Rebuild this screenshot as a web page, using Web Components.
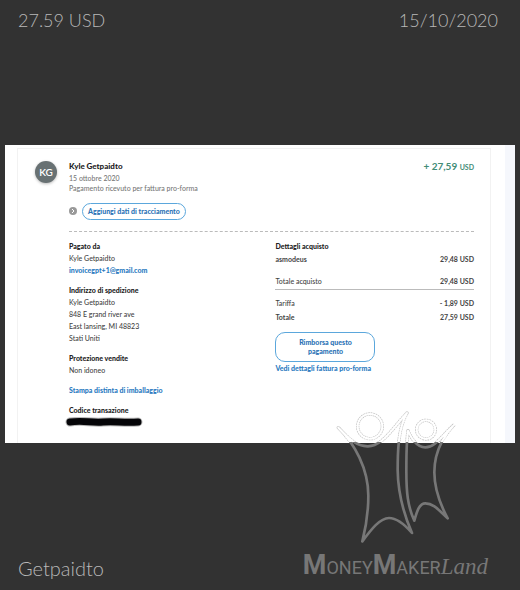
<!DOCTYPE html>
<html lang="it">
<head>
<meta charset="utf-8">
<meta name="viewport" content="width=device-width, initial-scale=1">
<title>Getpaidto</title>
<style>
    body {
        margin: 0;
        background: #323232;
        font-family: Lato, sans-serif;
    }
</style>
</head>
<body>
<proof-page>
    <span slot="amount">27.59 USD</span>
    <span slot="date">15/10/2020</span>
    <payment-receipt></payment-receipt>
    <span slot="site">Getpaidto</span>
    <brand-logo slot="brand"></brand-logo>
</proof-page>

<script>
function render(host, html) {
    const shadow = host.attachShadow({ mode: 'open' });
    const template = document.createElement('template');
    template.innerHTML = html;
    shadow.appendChild(template.content.cloneNode(true));
}

class ProofPage extends HTMLElement {
    constructor() {
        super();
        render(this, `
            <style>
                :host {
                    display: flex;
                    flex-direction: column;
                    min-height: 100vh;
                    color: #b8b8b8;
                    font-size: 18px;
                    font-weight: 300;
                    line-height: 24px;
                }
                header, footer {
                    display: flex;
                    justify-content: space-between;
                    align-items: flex-end;
                    padding: 8px 22px 8px 18px;
                }
                footer {
                    padding: 0 32px 10px 18px;
                    font-size: 20px;
                }
                main {
                    flex: 1;
                    display: flex;
                    flex-direction: column;
                    justify-content: center;
                    padding: 0 5px 6px;
                }
            </style>
            <header>
                <slot name="amount"></slot>
                <slot name="date"></slot>
            </header>
            <main><slot></slot></main>
            <footer>
                <slot name="site"></slot>
                <slot name="brand"></slot>
            </footer>
        `);
    }
}

class BrandLogo extends HTMLElement {
    constructor() {
        super();
        render(this, `
            <style>
                :host {
                    display: block;
                    position: relative;
                    color: #777;
                    font: 18px/24px Roboto, sans-serif;
                    white-space: nowrap;
                }
                b {
                    font-size: 27px;
                }
                i {
                    font: italic 23px/24px "Z003", "URW Chancery L", "Liberation Serif", serif;
                }
                /* the figures stand above the name and reach over the receipt */
                svg {
                    position: absolute;
                    right: 17px;
                    bottom: 21px;
                    width: 150px;
                    height: 160px;
                    fill: none;
                    stroke-linejoin: round;
                }
            </style>
            <svg viewBox="0 0 450 480" aria-hidden="true">
                <defs>
                    <clipPath id="upper"><rect width="450" height="129"/></clipPath>
                    <clipPath id="lower"><rect y="129" width="450" height="351"/></clipPath>
                    <g id="figures">
                        <circle cx="147" cy="82" r="37"/>
                        <circle cx="315" cy="92" r="28"/>
                        <path d="M52 86C82 117 105 143 141 142C184 141 212 91 258 42C233 86 230 145 230 214C231 284 248 345 273 402C248 373 225 357 204 357C177 357 151 391 124 427C134 388 142 348 142 290C142 210 101 134 52 86Z"/>
                        <path d="M261 95C270 116 287 145 313 145C345 145 364 107 400 77C360 119 340 162 340 220C340 276 359 319 380 358C353 333 337 313 313 313C295 313 288 336 280 365C260 322 256 280 256 215C256 160 257 123 261 95Z"/>
                    </g>
                </defs>
                <g clip-path="url(#lower)"><use href="#figures" stroke="#777" stroke-width="8"/></g>
                <g clip-path="url(#upper)">
                    <use href="#figures" stroke="#c4c4c4" stroke-width="10" stroke-dasharray="5 2"/>
                    <use href="#figures" stroke="#fff" stroke-width="6"/>
                </g>
            </svg>
            <span><b>M</b>ONEY<b>M</b>AKER<i>Land</i></span>
        `);
    }
}

class UserAvatar extends HTMLElement {
    constructor() {
        super();
        render(this, `
            <style>
                :host {
                    display: flex;
                    flex: none;
                    align-items: center;
                    justify-content: center;
                    width: 22px;
                    height: 22px;
                    border-radius: 50%;
                    background: #687173;
                    color: #fff;
                    font-size: 10px;
                    font-weight: 600;
                    box-shadow: 0 1px 3px #bbb;
                }
            </style>
            <slot></slot>
        `);
    }
}

class DetailGroup extends HTMLElement {
    constructor() {
        super();
        render(this, `
            <style>
                :host { display: block; }
                h3 {
                    margin: 0;
                    font-size: 7px;
                    font-weight: 900;
                    line-height: 12px;
                    color: #222;
                }
                ::slotted(div) { line-height: 12px; }
            </style>
            <h3></h3>
            <slot></slot>
        `);
    }
    connectedCallback() {
        this.shadowRoot.querySelector('h3').textContent = this.getAttribute('heading');
    }
}

class PillButton extends HTMLElement {
    constructor() {
        super();
        render(this, `
            <style>
                :host { display: block; }
                button {
                    display: block;
                    width: 100%;
                    padding: 3px 5px;
                    border: 1px solid #5ba7dc;
                    border-radius: 10px;
                    background: #fff;
                    color: #2a72b5;
                    font: 900 7px/9px Lato, sans-serif;
                }
                :host([large]) button {
                    padding: 5px 16px;
                }
            </style>
            <button type="button"><slot></slot></button>
        `);
    }
}

class PaymentReceipt extends HTMLElement {
    constructor() {
        super();
        render(this, `
            <style>
                :host {
                    display: block;
                    padding: 3px 14px 0 12px;
                    background: #fff;
                    border-right: 10px solid #f5f7fc;
                    color: #444;
                    font-size: 7px;
                    font-weight: 500;
                    line-height: 10px;
                }
                article {
                    display: flex;
                    gap: 12px;
                    padding: 12px 16px 16px 17px;
                    border: 1px solid #f2f2f2;
                    border-bottom: 0;
                }
                .body { flex: 1; }
                .top {
                    display: flex;
                    justify-content: space-between;
                }
                h2 {
                    margin: 0 0 1px;
                    color: #1d1d25;
                    font-size: 8px;
                    font-weight: 900;
                    line-height: 11px;
                }
                .muted { color: #777; }
                .amount {
                    color: #428c76;
                    font-size: 10px;
                    font-weight: 700;
                }
                small { font-size: 7px; }
                .track {
                    display: flex;
                    align-items: center;
                    gap: 5px;
                    margin-top: 10px;
                    padding-bottom: 11px;
                    border-bottom: 1px dashed #bbb;
                }
                .track svg {
                    width: 8px;
                    height: 8px;
                }
                .columns {
                    display: grid;
                    grid-template-columns: 207fr 199fr;
                    padding-top: 8px;
                }
                .left {
                    display: flex;
                    flex-direction: column;
                    gap: 8px;
                }
                a {
                    color: #2a7abf;
                    font-weight: 900;
                    line-height: 12px;
                    text-decoration: none;
                }
                .redacted {
                    display: block;
                    width: 78px;
                    height: 10px;
                    margin: 1px 0 0 -4px;
                }
                table {
                    width: 100%;
                    border-collapse: collapse;
                }
                td, th {
                    padding: 0;
                    height: 14px;
                    font-weight: 700;
                    text-align: left;
                }
                td { text-align: right; }
                .sum th, .sum td {
                    height: 16px;
                    padding-top: 7px;
                    border-bottom: 1px solid #bbb;
                }
                .sum th, .fee th { font-weight: 500; }
                .fee th, .fee td { padding-top: 6px; }
                pill-button[large] {
                    width: 100px;
                    margin-top: 8px;
                }
            </style>
            <article>
                <user-avatar>KG</user-avatar>
                <div class="body">
                    <div class="top">
                        <div>
                            <h2>Kyle Getpaidto</h2>
                            <div class="muted">15 ottobre 2020</div>
                            <div class="muted">Pagamento ricevuto per fattura pro-forma</div>
                        </div>
                        <div class="amount">+ 27,59 <small>USD</small></div>
                    </div>
                    <div class="track">
                        <svg viewBox="0 0 16 16" aria-hidden="true">
                            <circle cx="8" cy="8" r="8" fill="#999"/>
                            <path d="M6 4l4 4-4 4" fill="none" stroke="#fff" stroke-width="2"/>
                        </svg>
                        <pill-button>Aggiungi dati di tracciamento</pill-button>
                    </div>
                    <div class="columns">
                        <div class="left">
                            <detail-group heading="Pagato da">
                                <div>Kyle Getpaidto</div>
                                <div><a href="mailto:invoicegpt+1@gmail.com">invoicegpt+1@gmail.com</a></div>
                            </detail-group>
                            <detail-group heading="Indirizzo di spedizione">
                                <div>Kyle Getpaidto</div>
                                <div>848 E grand river ave</div>
                                <div>East lansing, MI 48823</div>
                                <div>Stati Uniti</div>
                            </detail-group>
                            <detail-group heading="Protezione vendite">
                                <div>Non idoneo</div>
                            </detail-group>
                            <a href="#">Stampa distinta di imballaggio</a>
                            <detail-group heading="Codice transazione">
                                <svg class="redacted" viewBox="0 0 78 10" aria-hidden="true">
                                    <path d="M5 5C18 3 26 6 38 5S58 6 73 5" fill="none" stroke="#555" stroke-width="9" stroke-linecap="round" opacity=".4"/>
                                    <path d="M5 5C18 3 26 6 38 5S58 6 73 5" fill="none" stroke="#050508" stroke-width="7" stroke-linecap="round"/>
                                </svg>
                            </detail-group>
                        </div>
                        <div class="right">
                            <detail-group heading="Dettagli acquisto">
                                <table>
                                    <tr><th scope="row">asmodeus</th><td>29,48 USD</td></tr>
                                    <tr class="sum"><th scope="row">Totale acquisto</th><td>29,48 USD</td></tr>
                                    <tr class="fee"><th scope="row">Tariffa</th><td>- 1,89 USD</td></tr>
                                    <tr><th scope="row">Totale</th><td>27,59 USD</td></tr>
                                </table>
                            </detail-group>
                            <pill-button large>Rimborsa questo pagamento</pill-button>
                            <a href="#">Vedi dettagli fattura pro-forma</a>
                        </div>
                    </div>
                </div>
            </article>
        `);
    }
}

customElements.define('user-avatar', UserAvatar);
customElements.define('detail-group', DetailGroup);
customElements.define('pill-button', PillButton);
customElements.define('payment-receipt', PaymentReceipt);
customElements.define('brand-logo', BrandLogo);
customElements.define('proof-page', ProofPage);
</script>
</body>
</html>
